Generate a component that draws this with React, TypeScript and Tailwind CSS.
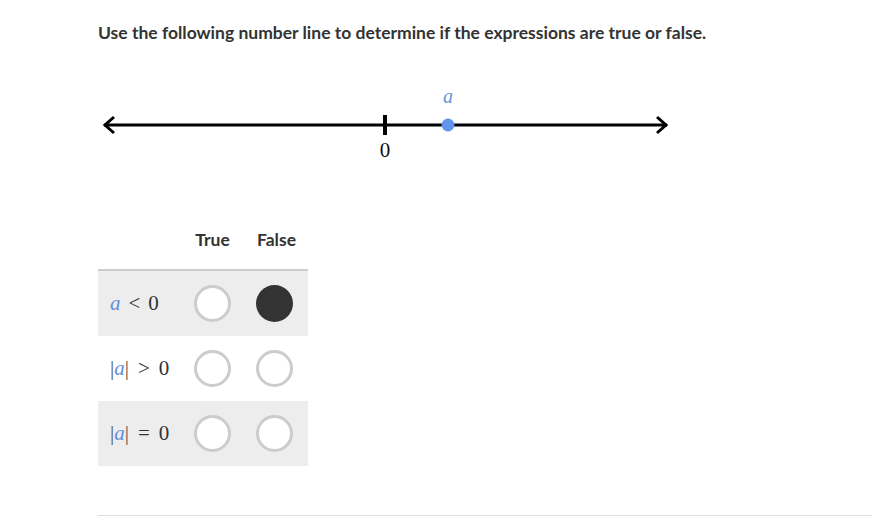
import React from "react";

const Radio = ({ filled }: { filled?: boolean }) =>
  filled ? (
    <div className="w-[37px] h-[37px] rounded-full bg-[#333333]" />
  ) : (
    <div className="w-[37px] h-[37px] rounded-full border-[3px] border-[#cccccc] bg-white" />
  );

const A = () => <span className="italic text-[#5f8fe0]">a</span>;

export default function App() {
  const rows: { label: React.ReactNode; bg: boolean; filled: number }[] = [
    {
      label: (
        <>
          <A />
          <span className="ml-[8px]">&lt;</span>
          <span className="ml-[8px]">0</span>
        </>
      ),
      bg: true,
      filled: 1,
    },
    {
      label: (
        <>
          <span className="text-[#555555]">|</span>
          <A />
          <span className="text-[#555555]">|</span>
          <span className="ml-[9px]">&gt;</span>
          <span className="ml-[9px]">0</span>
        </>
      ),
      bg: false,
      filled: -1,
    },
    {
      label: (
        <>
          <span className="text-[#555555]">|</span>
          <A />
          <span className="text-[#555555]">|</span>
          <span className="ml-[9px]">=</span>
          <span className="ml-[9px]">0</span>
        </>
      ),
      bg: true,
      filled: -1,
    },
  ];
  return (
    <div className="w-[872px] h-[527px] bg-white overflow-hidden" style={{ fontFamily: "Lato, 'Open Sans', sans-serif" }}>
      <div className="pl-[98px] pt-[21px]">
        <div className="text-[17.5px] leading-[24px] font-bold text-[#333333]">
          Use the following number line to determine if the expressions are true or false.
        </div>
        <svg width="600" height="100" viewBox="0 0 600 100" className="block mt-[35px]">
          <line x1="6" y1="45" x2="569" y2="45" stroke="#000" strokeWidth="3" />
          <polyline points="16,37 7,45 16,53" fill="none" stroke="#000" strokeWidth="3" />
          <polyline points="559,37 568,45 559,53" fill="none" stroke="#000" strokeWidth="3" />
          <line x1="287" y1="35" x2="287" y2="55" stroke="#000" strokeWidth="4" />
          <circle cx="350" cy="45" r="6.5" fill="#6495ed" />
          <text x="287" y="77" textAnchor="middle" fontFamily="'Liberation Serif', serif" fontSize="21" fill="#111">0</text>
          <text x="350" y="23" textAnchor="middle" fontFamily="'Liberation Serif', serif" fontStyle="italic" fontSize="20" fill="#6b95d8">a</text>
        </svg>
        <div className="mt-[45px] w-[210px]">
          <div className="flex h-[46px] items-start pt-[4px] border-b-2 border-[#cccccc] text-[17.5px] leading-[22px] font-bold text-[#333333]">
            <div className="w-[94px]" />
            <div className="w-[41px] text-center">True</div>
            <div className="w-[23px]" />
            <div className="w-[41px] text-center">False</div>
          </div>
          {rows.map((r, i) => (
            <div
              key={i}
              className={`flex items-center h-[65px] ${r.bg ? "bg-[#ededed]" : "bg-white"}`}
            >
              <div className="w-[96px] pl-[12px] text-[21px] text-[#333333]" style={{ fontFamily: "'Liberation Serif', 'DejaVu Serif', serif" }}>
                {r.label}
              </div>
              <Radio filled={r.filled === 0} />
              <div className="w-[25px]" />
              <Radio filled={r.filled === 1} />
            </div>
          ))}
        </div>
      </div>
      <div className="ml-[98px] mt-[49px] h-px bg-[#dddddd]" />
    </div>
  );
}
